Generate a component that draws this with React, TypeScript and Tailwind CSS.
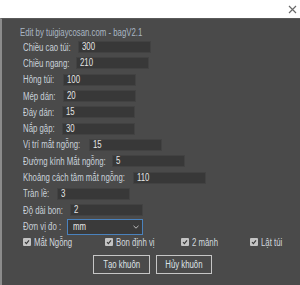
import React from 'react';

const rows = [
  { label: 'Chiều cao túi:', value: '300', w: 'w-[55px]' },
  { label: 'Chiều ngang:', value: '210', w: 'w-[53px]' },
  { label: 'Hông túi:', value: '100', w: 'w-[40px]' },
  { label: 'Mép dán:', value: '20', w: 'w-[40px]' },
  { label: 'Đáy dán:', value: '15', w: 'w-[39px]' },
  { label: 'Nắp gập:', value: '30', w: 'w-[39px]' },
  { label: 'Vị trí mắt ngỗng:', value: '15', w: 'w-[66px]' },
  { label: 'Đường kính Mắt ngỗng:', value: '5', w: 'w-[89px]' },
  { label: 'Khoảng cách tâm mắt ngỗng:', value: '110', w: 'w-[110px]' },
  { label: 'Tràn lề:', value: '3', w: 'w-[34px]' },
  { label: 'Độ dài bon:', value: '2', w: 'w-[47px]' },
];

const checks = [
  { label: 'Mắt Ngỗng', w: 'w-[82px]' },
  { label: 'Bon định vị', w: 'w-[76px]' },
  { label: '2 mảnh', w: 'w-[69px]' },
  { label: 'Lật túi', w: 'w-[50px]' },
];

// the source screenshot is squeezed sideways, so text is narrowed to match
const Txt = ({ children, center }: { children: React.ReactNode; center?: boolean }) => (
  <span className={`inline-block whitespace-nowrap scale-x-[0.78] ${center ? 'origin-center' : 'origin-left'}`}>{children}</span>
);

const Box = () => (
  <span className="w-[8px] h-[8px] bg-[#c4c4c4] rounded-[1px] flex items-center justify-center shrink-0">
    <svg width="6" height="6" viewBox="0 0 6 6">
      <path d="M1 3.2 L2.4 4.6 L5 1.4" stroke="#3a3a3a" strokeWidth="1.2" fill="none" />
    </svg>
  </span>
);

const App = () => {
  return (
    <div className="w-[300px] h-[285px] flex flex-col bg-white font-['Liberation_Sans',Arial,sans-serif] text-[10px]">
      {/* title bar */}
      <div className="h-[18px] flex items-center justify-end pr-[3px] bg-white">
        <svg width="9" height="9" viewBox="0 0 9 9">
          <path d="M1 1 L8 8 M8 1 L1 8" stroke="#6a6a6a" strokeWidth="1.2" />
        </svg>
      </div>
      <div className="flex-1 bg-[#4a4a4a] border-l-2 border-[#8c8c8c] border-t border-t-[#5a5a5a] pl-[18px] pt-[7px]">
        <div className="text-[#a9b6c3] leading-[14px]">
          <Txt>Edit by tuigiaycosan.com - bagV2.1</Txt>
        </div>
        <div className="flex flex-col pl-[3px] -mt-[1px]">
          {rows.map((r) => (
            <div key={r.label} className="h-[16.3px] flex items-center">
              <div className={`${r.w} shrink-0 text-[#c9d1d9]`}>
                <Txt>{r.label}</Txt>
              </div>
              <div className="w-[73px] h-[12px] bg-[#383838] border border-[#424242] text-[#e6e6e6] pl-[3px] flex items-center leading-none">
                <Txt>{r.value}</Txt>
              </div>
            </div>
          ))}
          <div className="h-[17px] flex items-center">
            <div className="w-[44px] shrink-0 text-[#c9d1d9]">
              <Txt>Đơn vị đo :</Txt>
            </div>
            <div className="w-[76px] h-[16px] bg-[#3a3a3a] border border-[#4a82bd] text-[#e6e6e6] pl-[5px] pr-[3px] flex items-center justify-between leading-none">
              <Txt>mm</Txt>
              <svg width="6" height="4" viewBox="0 0 6 4">
                <path d="M0.5 0.8 L3 3.2 L5.5 0.8" stroke="#bbbbbb" strokeWidth="1" fill="none" />
              </svg>
            </div>
          </div>
          <div className="h-[16px] flex items-center -mt-[1px]">
            {checks.map((c) => (
              <div key={c.label} className={`${c.w} shrink-0 flex items-center gap-[3px]`}>
                <Box />
                <span className="text-[#d2d8de]">
                  <Txt>{c.label}</Txt>
                </span>
              </div>
            ))}
          </div>
          <div className="flex gap-[6px] pl-[70px] mt-[5px]">
            <button className="w-[57px] h-[19px] border border-[#c6c6c6] text-[#dfe3e7] flex items-center justify-center leading-none">
              <Txt center>Tạo khuôn</Txt>
            </button>
            <button className="w-[56px] h-[19px] border border-[#c6c6c6] text-[#dfe3e7] flex items-center justify-center leading-none">
              <Txt center>Hủy khuôn</Txt>
            </button>
          </div>
        </div>
      </div>
    </div>
  );
};

export default App;
